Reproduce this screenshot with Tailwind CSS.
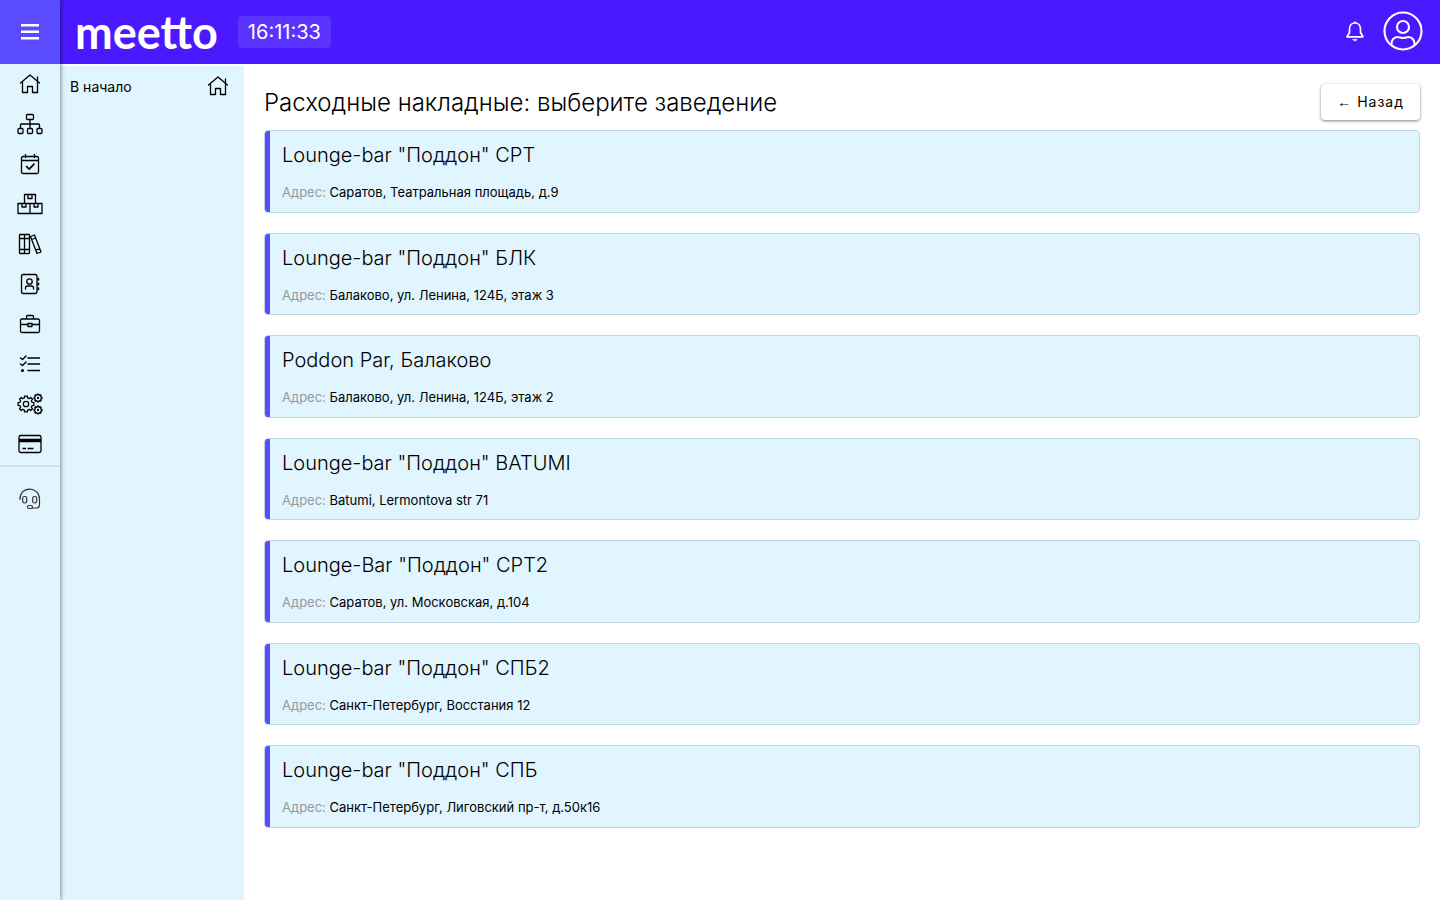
<!DOCTYPE html>
<html lang="ru">
<head>
    <meta charset="UTF-8">
    <meta name="viewport" content="width=device-width, initial-scale=1.0">
    <title>Расходные накладные</title>
    <script src="https://cdn.jsdelivr.net/npm/@tailwindcss/browser@4"></script>
</head>
<body class="flex min-h-screen bg-white text-black font-['Inter',sans-serif]">

    <!-- Icon rail -->
    <aside class="relative z-10 flex w-[60px] shrink-0 flex-col bg-[#e1f5fe] shadow-[0_0_5px_rgba(0,0,0,0.6)]">
        <button type="button" aria-label="Меню" class="flex h-16 items-center justify-center bg-[#5b4bff] text-white">
            <svg class="h-6 w-6" viewBox="0 0 24 24" fill="none" stroke="currentColor" stroke-width="2.4"><path d="M3 5.2h18M3 11.7h18M3 18.2h18"/></svg>
        </button>
        <nav class="flex flex-col border-b-2 border-b-[#cfe3ee] pb-px">
            <a href="#" aria-label="В начало" class="flex h-10 items-center justify-center">
                <svg class="h-7 w-7" viewBox="0 0 28 28" fill="none" stroke="currentColor" stroke-width="1.3" stroke-linecap="round" stroke-linejoin="round"><path d="M4.500 13 14 5l9.500 8M6.500 11.500V22.500H11.500V16.500H16.500V22.500H21.500V11.500M21.500 11V7"/></svg>
            </a>
            <a href="#" aria-label="Структура" class="flex h-10 items-center justify-center">
                <svg class="h-7 w-7" viewBox="0 0 28 28" fill="none" stroke="currentColor" stroke-width="1.3" stroke-linejoin="round"><rect x="10.500" y="4.500" width="7" height="5" rx="1"/><rect x="2" y="18.500" width="5" height="5" rx="1"/><rect x="11.500" y="18.500" width="5" height="5" rx="1"/><rect x="21" y="18.500" width="5" height="5" rx="1"/><path d="M14 9.500v9M4.500 18.500v-3.500q0-1 1-1h17q1 0 1 1v3.500"/></svg>
            </a>
            <a href="#" aria-label="Календарь" class="flex h-10 items-center justify-center">
                <svg class="h-7 w-7" viewBox="0 0 28 28" fill="none" stroke="currentColor" stroke-width="1.3" stroke-linecap="round" stroke-linejoin="round"><rect x="5.500" y="6.500" width="17" height="17" rx="1.500"/><path d="M5.500 10.500h17M9.500 4.500v3M18.500 4.500v3"/><path stroke-width="1.7" d="m10.500 16.500 2.700 2.700 4.800-5"/></svg>
            </a>
            <a href="#" aria-label="Склад" class="flex h-10 items-center justify-center">
                <svg class="h-7 w-7" viewBox="0 0 28 28" fill="none" stroke="currentColor" stroke-width="1.3" stroke-linejoin="round"><path d="M8.500 13.500v-9h11v9M2 13.500h24v10H2zM14 13.500v10"/><path d="M12 4.500v4h4v-4M6 13.500v3.500h4v-3.500M18 13.500v3.500h4v-3.500"/></svg>
            </a>
            <a href="#" aria-label="Справочники" class="flex h-10 items-center justify-center">
                <svg class="h-7 w-7" viewBox="0 0 28 28" fill="none" stroke="currentColor" stroke-width="1.3" stroke-linejoin="round"><rect x="3.500" y="4.500" width="10" height="19" rx=".8"/><path d="M8.500 4.500v19M3.500 8.500h10M3.500 19.500h10M14.500 6.500l4-1.500 6.500 17-4 1.500zM15.700 9.500l4-1.500M19.800 20.200l4-1.500"/></svg>
            </a>
            <a href="#" aria-label="Контакты" class="flex h-10 items-center justify-center">
                <svg class="h-7 w-7" viewBox="0 0 28 28" fill="none" stroke="currentColor" stroke-width="1.3" stroke-linecap="round"><rect x="5.500" y="4.500" width="15.500" height="19" rx="2"/><circle cx="13.500" cy="11.500" r="2.700"/><path d="M9.500 19v-1q0-2 2-2h4q2 0 2 2v1"/><path stroke-width="2" d="M22.300 8.800v1M22.300 13.500v1M22.300 18.200v1"/></svg>
            </a>
            <a href="#" aria-label="Портфель" class="flex h-10 items-center justify-center">
                <svg class="h-7 w-7" viewBox="0 0 28 28" fill="none" stroke="currentColor" stroke-width="1.3" stroke-linejoin="round"><rect x="4.500" y="9" width="19" height="13.500" rx="1.500"/><path d="M10.500 9V6.500q0-1 1-1h5q1 0 1 1V9M4.500 14.500h7.500M16 14.500h7.500"/><path d="M12 13.500h4v3h-4z"/></svg>
            </a>
            <a href="#" aria-label="Задачи" class="flex h-10 items-center justify-center">
                <svg class="h-7 w-7" viewBox="0 0 28 28" fill="none" stroke="currentColor" stroke-width="1.500" stroke-linecap="round" stroke-linejoin="round"><path d="M12 8h11.500M12 14h11.500M12 20.500h11.500M4.500 8l2 1.500L10 6M4.500 14l2 1.500L10 12"/><circle cx="6.500" cy="20.500" r=".8" fill="currentColor"/></svg>
            </a>
            <a href="#" aria-label="Настройки" class="flex h-10 items-center justify-center">
                <svg class="h-7 w-7" viewBox="0 0 28 28" fill="none" stroke="currentColor" stroke-width="1.3" stroke-linejoin="round">
                    <defs><path id="gear" vector-effect="non-scaling-stroke" d="M6.140-1.600 7.900-1.400V1.400L6.140 1.600 5.340 3.340 6.470 4.700 4.700 6.470 3.340 5.340 1.600 6.140 1.400 7.900H-1.400L-1.600 6.140-3.340 5.340-4.700 6.470-6.470 4.700-5.340 3.340-6.140 1.600-7.900 1.400V-1.400L-6.140-1.600-5.340-3.340-6.470-4.700-4.700-6.470-3.340-5.340-1.600-6.140-1.400-7.900H1.400L1.600-6.140 3.340-5.340 4.700-6.470 6.470-4.700 5.340-3.340Z"/></defs>
                    <use href="#gear" transform="translate(10 14)"/>
                    <circle cx="10" cy="14" r="2.700"/>
                    <use href="#gear" transform="translate(22 8) scale(.5)"/>
                    <use href="#gear" transform="translate(22 20) scale(.5)"/>
                    <circle cx="22" cy="8" r=".5"/><circle cx="22" cy="20" r=".5"/>
                </svg>
            </a>
            <a href="#" aria-label="Оплата" class="flex h-10 items-center justify-center">
                <svg class="h-7 w-7" viewBox="0 0 28 28" fill="none" stroke="currentColor" stroke-width="1.3"><rect x="3" y="5.500" width="22" height="17" rx="1.800"/><path stroke-width="3.500" d="M3 10.500h22"/><path d="M6.500 18.500h3.500M11.500 18.500h6"/></svg>
            </a>
        </nav>
        <a href="#" aria-label="Поддержка" class="mt-3 flex h-10 items-center justify-center text-[#333]">
            <svg class="h-7 w-7" viewBox="0 0 28 28" fill="none" stroke="currentColor" stroke-width="1.2" stroke-linecap="round" stroke-linejoin="round"><path d="M4 14.500C3.800 8 8 4.200 13.500 4.200S23.500 8 23.500 14v6q0 3-3 3H16.500"/><rect x="6.700" y="11.500" width="4" height="6.500" rx="1.700"/><rect x="16.700" y="11.500" width="4" height="6.500" rx="1.700"/><rect x="11.500" y="20.500" width="5" height="3" rx="1.500"/></svg>
        </a>
    </aside>

    <div class="flex min-w-0 flex-1 flex-col">
        <header class="flex h-16 items-center bg-[#4a19ff] pr-4 pl-[15px] text-white">
            <a href="#" class="font-['Lato',sans-serif] text-[45px] leading-[60px] font-bold">meetto</a>
            <time class="ml-5 rounded-sm bg-[#5b33ff] px-2.5 py-0.5 text-xl leading-7">16:11:33</time>
            <div class="ml-auto flex items-center gap-4 pr-px pb-[3px]">
                <button type="button" aria-label="Уведомления">
                    <svg class="h-6 w-6" viewBox="0 0 24 24" fill="none" stroke="currentColor" stroke-width="1.7" stroke-linejoin="round" stroke-linecap="round"><path d="M12 4V3M12 4c3.600 0 5.500 2.800 5.500 6v3.500l2.500 4.300H4l2.500-4.300V10c0-3.200 1.900-6 5.500-6z"/><path d="M10 20.500h4q-.5 1.300-2 1.300t-2-1.300z" fill="currentColor" stroke-width=".6"/></svg>
                </button>
                <button type="button" aria-label="Профиль">
                    <svg class="h-10 w-10" viewBox="0 0 40 40" fill="none" stroke="currentColor" stroke-width="2.100"><circle cx="20" cy="20" r="18.500"/><circle cx="20" cy="16" r="6"/><path d="M8.500 34C8 29 11 26 14.500 26c2 0 3 1 5.500 1s3.500-1 5.500-1c3.500 0 6.500 3 6 8"/></svg>
                </button>
            </div>
        </header>

        <div class="flex flex-1">
            <!-- Submenu -->
            <nav class="mt-0.5 w-[184px] shrink-0 bg-[#e1f5fe]">
                <a href="#" class="flex h-10 items-center justify-between px-3 pl-2.5 text-sm">
                    <span class="pt-0.5">В начало</span>
                    <svg class="h-7 w-7" viewBox="0 0 28 28" fill="none" stroke="currentColor" stroke-width="1.3" stroke-linecap="round" stroke-linejoin="round"><path d="M4.500 13 14 5l9.500 8M6.500 11.500V22.500H11.500V16.500H16.500V22.500H21.500V11.500M21.500 11V7"/></svg>
                </a>
            </nav>

            <main class="min-w-0 flex-1 p-5">
                <div class="mb-2 flex items-start justify-between">
                    <h1 class="text-2xl leading-[38px] font-light">Расходные накладные: выберите заведение</h1>
                    <button type="button" class="h-9 rounded-sm bg-white px-4 text-sm tracking-[1px] shadow-[0_1px_3px_rgba(0,0,0,0.5)]"><span class="font-['Liberation_Sans',sans-serif]">←</span> Назад</button>
                </div>

                <div class="flex flex-col gap-5">
                    <a href="#" class="flex overflow-hidden rounded-sm border border-[#bdd5e2] bg-[#e1f5fe]">
                        <span class="w-[5px] bg-[#5b4bff]"></span>
                        <span class="block px-3 py-[9px]">
                            <span class="mb-[13px] block text-xl leading-normal font-light">Lounge-bar "Поддон" СРТ</span>
                            <span class="block text-[13px] leading-normal"><span class="text-[#999]">Адрес:</span> Саратов, Театральная площадь, д.9</span>
                        </span>
                    </a>
                    <a href="#" class="flex overflow-hidden rounded-sm border border-[#bdd5e2] bg-[#e1f5fe]">
                        <span class="w-[5px] bg-[#5b4bff]"></span>
                        <span class="block px-3 py-[9px]">
                            <span class="mb-[13px] block text-xl leading-normal font-light">Lounge-bar "Поддон" БЛК</span>
                            <span class="block text-[13px] leading-normal"><span class="text-[#999]">Адрес:</span> Балаково, ул. Ленина, 124Б, этаж 3</span>
                        </span>
                    </a>
                    <a href="#" class="flex overflow-hidden rounded-sm border border-[#bdd5e2] bg-[#e1f5fe]">
                        <span class="w-[5px] bg-[#5b4bff]"></span>
                        <span class="block px-3 py-[9px]">
                            <span class="mb-[13px] block text-xl leading-normal font-light">Poddon Par, Балаково</span>
                            <span class="block text-[13px] leading-normal"><span class="text-[#999]">Адрес:</span> Балаково, ул. Ленина, 124Б, этаж 2</span>
                        </span>
                    </a>
                    <a href="#" class="flex overflow-hidden rounded-sm border border-[#bdd5e2] bg-[#e1f5fe]">
                        <span class="w-[5px] bg-[#5b4bff]"></span>
                        <span class="block px-3 py-[9px]">
                            <span class="mb-[13px] block text-xl leading-normal font-light">Lounge-bar "Поддон" BATUMI</span>
                            <span class="block text-[13px] leading-normal"><span class="text-[#999]">Адрес:</span> Batumi, Lermontova str 71</span>
                        </span>
                    </a>
                    <a href="#" class="flex overflow-hidden rounded-sm border border-[#bdd5e2] bg-[#e1f5fe]">
                        <span class="w-[5px] bg-[#5b4bff]"></span>
                        <span class="block px-3 py-[9px]">
                            <span class="mb-[13px] block text-xl leading-normal font-light">Lounge-Bar "Поддон" СРТ2</span>
                            <span class="block text-[13px] leading-normal"><span class="text-[#999]">Адрес:</span> Саратов, ул. Московская, д.104</span>
                        </span>
                    </a>
                    <a href="#" class="flex overflow-hidden rounded-sm border border-[#bdd5e2] bg-[#e1f5fe]">
                        <span class="w-[5px] bg-[#5b4bff]"></span>
                        <span class="block px-3 py-[9px]">
                            <span class="mb-[13px] block text-xl leading-normal font-light">Lounge-bar "Поддон" СПБ2</span>
                            <span class="block text-[13px] leading-normal"><span class="text-[#999]">Адрес:</span> Санкт-Петербург, Восстания 12</span>
                        </span>
                    </a>
                    <a href="#" class="flex overflow-hidden rounded-sm border border-[#bdd5e2] bg-[#e1f5fe]">
                        <span class="w-[5px] bg-[#5b4bff]"></span>
                        <span class="block px-3 py-[9px]">
                            <span class="mb-[13px] block text-xl leading-normal font-light">Lounge-bar "Поддон" СПБ</span>
                            <span class="block text-[13px] leading-normal"><span class="text-[#999]">Адрес:</span> Санкт-Петербург, Лиговский пр-т, д.50к16</span>
                        </span>
                    </a>
                </div>
            </main>
        </div>
    </div>

</body>
</html>
